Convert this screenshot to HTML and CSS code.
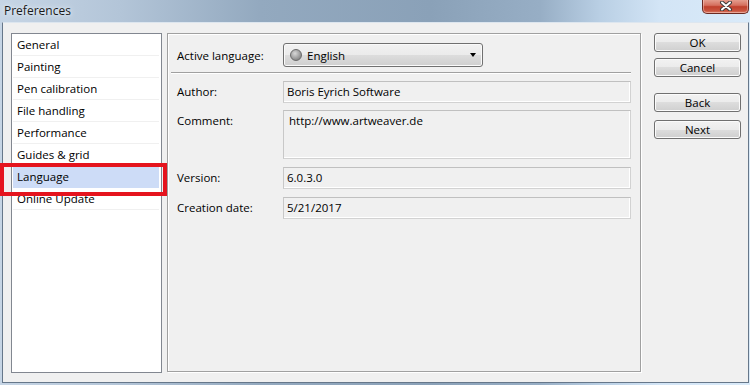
FILE: index.html
```html
<!DOCTYPE html>
<html>
<head>
<meta charset="utf-8">
<link rel="stylesheet" href="styles.css">
</head>
<body>
<div class="window">
  <div class="titlebar">
    <span class="title">Preferences</span>
    <div class="close">
      <svg width="14" height="10" viewBox="0 0 14 10">
        <path d="M3 1.5 L11 8.5 M11 1.5 L3 8.5" stroke="#3b3b3b" stroke-width="4" stroke-linecap="round"/>
        <path d="M3 1.5 L11 8.5 M11 1.5 L3 8.5" stroke="#ffffff" stroke-width="2" stroke-linecap="round"/>
      </svg>
    </div>
  </div>
  <div class="client">
    <ul class="nav">
      <li>General</li>
      <li>Painting</li>
      <li>Pen calibration</li>
      <li>File handling</li>
      <li>Performance</li>
      <li>Guides &amp; grid</li>
      <li class="sel">Language</li>
      <li>Online Update</li>
    </ul>
    <div class="panel">
      <div class="row top">
        <span class="label">Active language:</span>
        <div class="combo">
          <span class="globe"></span>
          <span class="combo-text">English</span>
          <span class="arrow"></span>
        </div>
      </div>
      <div class="sep"></div>
      <div class="row author">
        <span class="label">Author:</span>
        <div class="field">Boris Eyrich Software</div>
      </div>
      <div class="row">
        <span class="label">Comment:</span>
        <div class="field multi">http://www.artweaver.de</div>
      </div>
      <div class="row">
        <span class="label">Version:</span>
        <div class="field">6.0.3.0</div>
      </div>
      <div class="row">
        <span class="label">Creation date:</span>
        <div class="field">5/21/2017</div>
      </div>
    </div>
    <div class="buttons">
      <button class="btn ok">OK</button>
      <button class="btn">Cancel</button>
      <button class="btn back">Back</button>
      <button class="btn next">Next</button>
    </div>
  </div>
  <div class="highlight-box"></div>
</div>
</body>
</html>
```
FILE: styles.css
```css
* { box-sizing: border-box; }
html, body { margin: 0; padding: 0; }
body {
  width: 750px;
  height: 385px;
  overflow: hidden;
  font-family: "Open Sans", "Noto Sans", sans-serif;
  font-size: 11.5px;
  color: #000;
}
.window {
  position: relative;
  width: 750px;
  height: 385px;
  background: linear-gradient(90deg, #c6d5e5 0px, #b3c5d8 120px, #93a9bf 260px, #8aa1b8 430px, #97aec5 540px, #b9cfe4 600px, #d3e5f6 660px, #d9eaf9 750px);
  padding: 0 1px 0 2px;
}
.titlebar {
  height: 22px;
  display: flex;
  align-items: flex-start;
}
.title {
  margin-left: 2px;
  margin-top: 2px;
  font-size: 12px;
  color: #1a1a1a;
  text-shadow: 0 0 6px #e6eef6, 0 0 3px #e6eef6;
}
.close {
  margin-left: auto;
  margin-right: 0;
  width: 47px;
  height: 15px;
  margin-top: -1px;
  border: 1px solid #6b2a22;
  border-top: none;
  border-radius: 0 0 5px 5px;
  background: linear-gradient(180deg, #e7a596 0%, #d5705e 45%, #c0402c 55%, #c9553f 85%, #de8672 100%);
  display: flex;
  align-items: center;
  justify-content: center;
  box-shadow: inset 0 0 0 1px rgba(255,220,210,0.45);
}
.close svg { display: block; margin-top: -1px; }
.client {
  height: 361px;
  background: #f0f0f0;
  border: 1px solid #66778a;
  border-top-color: #dde6ef;
  display: flex;
  align-items: flex-start;
  padding: 10px 0 0 8px;
}
.nav {
  list-style: none;
  margin: 0;
  width: 151px;
  height: 340px;
  background: #fff;
  border: 1px solid #828790;
  padding: 0 1px;
}
.nav li {
  height: 22px;
  line-height: 21px;
  padding-left: 4px;
  border-bottom: 1px solid #f0f0f0;
  margin: 0 1px 0 0;
  white-space: nowrap;
}
.nav li.sel {
  background: #cddcf7;
  border-bottom-color: #cddcf7;
}
.panel {
  margin-left: 5px;
  width: 474px;
  height: 339px;
  border: 1px solid #a0a0a0;
  box-shadow: 1px 1px 0 #fff, inset 1px 1px 0 #fff;
  padding: 9px 9px 0 9px;
}
.row {
  display: flex;
  align-items: flex-start;
  margin-bottom: 8px;
}
.row.author { margin-bottom: 7px; }
.row.top { align-items: center; margin-bottom: 5px; }
.label {
  width: 106px;
  flex: none;
  line-height: 21px;
  white-space: nowrap;
}
.combo {
  width: 200px;
  height: 24px;
  border: 1px solid #707070;
  border-radius: 3px;
  background: linear-gradient(180deg, #f2f2f2 0%, #ebebeb 50%, #dddddd 50%, #cfcfcf 100%);
  box-shadow: inset 0 0 0 1px #fafafa;
  display: flex;
  align-items: center;
  padding-left: 6px;
}
.globe {
  width: 12px;
  height: 12px;
  border-radius: 50%;
  background: radial-gradient(circle at 40% 35%, #d8d8d8 0%, #a8a8a8 45%, #6e6e6e 100%);
  border: 1px solid #6a6a6a;
}
.combo-text { margin-left: 5px; }
.arrow {
  margin-left: auto;
  margin-right: 6px;
  width: 0;
  height: 0;
  border-left: 3.5px solid transparent;
  border-right: 3.5px solid transparent;
  border-top: 4px solid #000;
}
.sep {
  height: 2px;
  border-top: 1px solid #a0a0a0;
  border-bottom: 1px solid #ffffff;
  margin: 0 0 7px -6px;
}
.field {
  flex: 1;
  height: 22px;
  line-height: 20px;
  padding-left: 3px;
  background: #f0f0f0;
  border: 1px solid #d2d2d2;
  border-top-color: #c0c0c0;
  border-left-color: #c8c8c8;
  box-shadow: inset -1px -1px 0 #ffffff;
  white-space: nowrap;
}
.field.multi {
  height: 49px;
  padding-left: 5px;
  padding-top: 0;
}
.buttons {
  margin-left: 13px;
  display: flex;
  flex-direction: column;
  width: 87px;
}
.btn {
  height: 19px;
  margin: 6px 0 0 0;
  padding: 0;
  font-family: inherit;
  font-size: 11.5px;
  color: #000;
  border: 1px solid #707070;
  border-radius: 3px;
  background: linear-gradient(180deg, #f2f2f2 0%, #ebebeb 50%, #dddddd 50%, #cfcfcf 100%);
  box-shadow: inset 0 0 0 1px #fbfbfb;
  line-height: 16px;
}
.btn.ok { margin-top: 0; }
.btn.back { margin-top: 16px; }
.btn.next { margin-top: 8px; }
.highlight-box {
  position: absolute;
  left: 0;
  top: 163px;
  width: 167px;
  height: 33px;
  border: 4px solid #e5141e;
}
```
